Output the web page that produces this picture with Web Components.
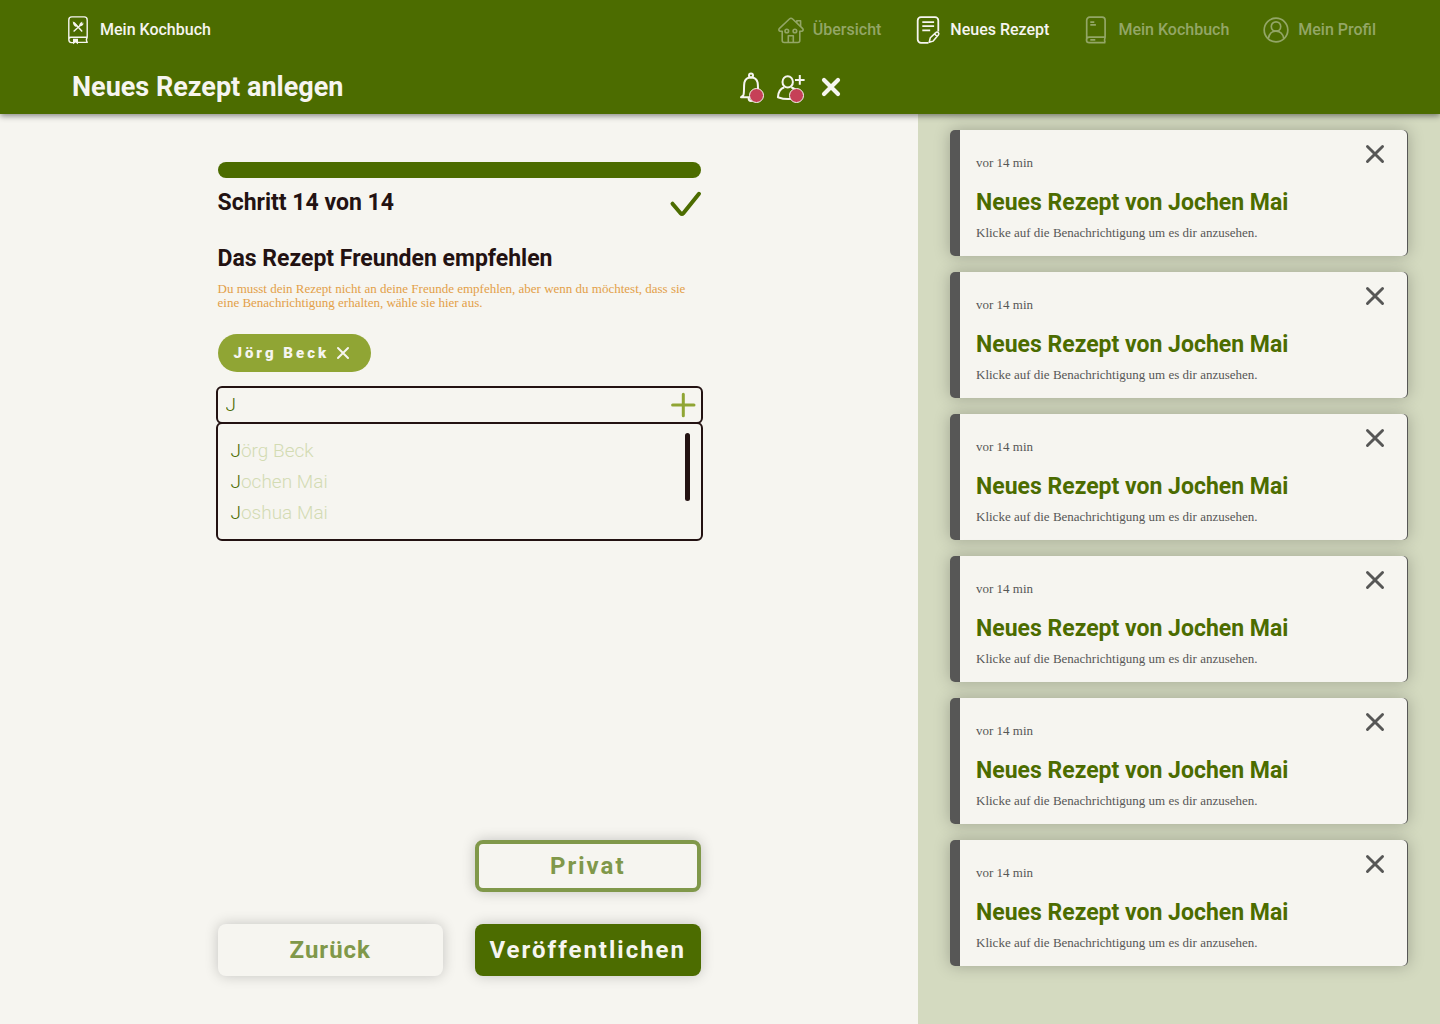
<!DOCTYPE html>
<html lang="de">
<head>
<meta charset="utf-8">
<meta name="viewport" content="width=device-width, initial-scale=1">
<title>Mein Kochbuch – Neues Rezept anlegen</title>
<style>
  :root {
    --green: #4c6c00;
    --moss: #80984a;
    --lime: #90a534;
    --paper: #f6f5f0;
    --ink: #231212;
    --grey: #575756;
    --sage: #d4dac0;
    --orange: #e39f48;
    --rose: #c64057;
    --slab: "Roboto Slab", "Liberation Serif", serif;
    --side: 36.25%;
  }
  body {
    margin: 0;
    background: var(--paper);
    color: var(--ink);
    font-family: Roboto, sans-serif;
  }
</style>
</head>
<body>
<kb-app></kb-app>

<script>
const define = (name, html, setup) => {
  const template = document.createElement('template');
  template.innerHTML = `<style>*{box-sizing:border-box}button{font:inherit;color:inherit;background:none;border:0;padding:0;cursor:pointer}</style>${html}`;
  customElements.define(name, class extends HTMLElement {
    constructor() {
      super();
      this.attachShadow({ mode: 'open' }).append(template.content.cloneNode(true));
    }
    connectedCallback() {
      if (setup) setup(this, this.shadowRoot);
    }
  });
};

const icons = {
  logo: `<g stroke-width="1.4"><path d="M4.8 23.500V3.900a3 3 0 0 1 3-3h12.400a3 3 0 0 1 3 3v17.300H6.800a2.400 2.400 0 0 0-2 2.400c0 1.800 1 3 2.600 3h2M13.500 26.400h9.700c-1-1.500-1-3.400 0-5.200"/><path d="m10 6.500 8.200 9M18 7.800 9.600 15.600"/></g><path fill="currentColor" stroke="none" d="M9 22.700h5v5.500l-2.500-1.700L9 28.200zM8.800 5.200l4.700 4.400-1.300 1.300C10 10.200 8.800 8 8.800 5.200zM15.500 10.200c-.8-2 .4-3.400 2.800-4.800l-.8 2 2-1.500-1.300 2.100 1.600-.7c-.8 2-2.600 3.600-4.300 2.900z"/>`,
  home: `<g stroke-width="1.600"><path d="M5.200 15.200H3.500c-1.700 0-2.200-1.700-1-2.800L12.400 3c1-.9 2.200-.9 3.200 0l9.900 9.400c1.200 1.100.7 2.800-1 2.800h-1.700v9.300a2 2 0 0 1-2 2H7.200a2 2 0 0 1-2-2z"/><path d="M19.800 6.800V4.700h3.800v5.700"/><circle cx="9.800" cy="15" r="1.800"/><circle cx="17.900" cy="15" r="1.800"/><path d="M11.300 26.200v-6.400h5v6.400M14.500 23h.2"/></g>`,
  note: `<g stroke-width="1.800"><path d="M14.500 26.800H7a3.300 3.300 0 0 1-3.300-3.300V4.500A3.300 3.300 0 0 1 7 1.200h14a3.300 3.300 0 0 1 3.300 3.300v11"/><path d="M8.300 6.200h11.800M8.300 10.200h11.800M8.300 14.300h7.900"/><path d="m15.200 26.300 1.100-4.500 5.500-5.200a1.700 1.700 0 0 1 2.500 2.500l-5.100 6zM20.700 18l2.400 2.500" stroke-width="1.500"/></g>`,
  book: `<g stroke-width="1.700"><path d="M4.700 24V4.200a3 3 0 0 1 3-3h12.400a3 3 0 0 1 3 3v17H7.200a2.600 2.600 0 0 0 0 5.400h16.200M23.100 21.200c-.7 1.700-.7 3.600 0 5.300"/><path d="M8.300 6.100h4M8.300 8.800h5.600M8.300 23.900h5"/></g>`,
  profile: `<g stroke-width="1.700"><circle cx="14" cy="14" r="11.800"/><circle cx="14" cy="10.500" r="4.700"/><path d="M6.300 22.500c.6-4.400 3.700-7.300 7.700-7.300s7.100 2.900 7.700 7.300"/></g>`,
  bell: `<g stroke-width="2"><circle cx="14" cy="2.400" r="2"/><path d="M6.300 22.400c1.200-2.700.3-8.700 1.100-12.900.7-3.200 3.200-5.100 6.600-5.100s5.900 1.900 6.600 5.100c.8 4.200-.1 10.200 1.100 12.900l2.400 1.800H4z"/><path d="M11.600 25c0 4 4.800 4 4.800 0"/></g>`,
  addfriend: `<g stroke-width="2"><ellipse cx="10.700" cy="8.900" rx="5.200" ry="5.700"/><path d="M7.300 14.200C3.600 15.400 1.200 19 .900 24.200c5.800 2.200 14.200 2.200 20.200.3-.3-5.200-2.400-9-6.900-10.300"/><path d="M18 6.900h9.600M22.800 2v9.800"/></g>`,
  close: `<path stroke-width="4.200" stroke-linecap="round" d="m7 7 14 14M21 7 7 21"/>`,
  cross: `<path stroke-width="3.400" stroke-linecap="round" d="m5.200 5.200 17.600 17.600M22.800 5.200 5.200 22.800"/>`,
  check: `<path stroke-width="4" stroke-linecap="round" stroke-linejoin="round" d="m1.500 14.700 8.300 9.800c.7.800 1.600.8 2.300 0L28 4.800"/>`,
  plus: `<path stroke-width="3" stroke-linecap="round" d="M14.300 3.300v21.400M3.600 14H25"/>`
};

define('kb-icon', `
  <style>
    :host { display: block; flex: none; width: var(--size, 28px); height: var(--size, 28px); }
    svg { display: block; width: 100%; height: 100%; overflow: visible; fill: none; stroke: currentColor; stroke-linejoin: round; }
  </style>
  <svg viewBox="0 0 28 28" aria-hidden="true"></svg>`,
  (host, root) => { root.querySelector('svg').innerHTML = icons[host.getAttribute('name')]; });

define('kb-nav-link', `
  <style>
    :host { display: block; }
    a { display: flex; align-items: center; gap: 8px; color: var(--paper); text-decoration: none; font-size: 16px; line-height: 20px; font-weight: 500; white-space: nowrap; }
    :host([muted]) a { color: #93a666; }
  </style>
  <a href="#"><kb-icon></kb-icon><slot></slot></a>`,
  (host, root) => {
    const fresh = document.createElement('kb-icon');
    fresh.setAttribute('name', host.getAttribute('icon'));
    root.querySelector('kb-icon').replaceWith(fresh);
  });

define('kb-header', `
  <style>
    :host { display: block; position: relative; z-index: 1; background: var(--green); color: var(--paper); box-shadow: 0 2px 6px rgba(0,0,0,.45); }
    .top { display: flex; justify-content: space-between; align-items: center; height: 60px; padding: 0 64px; }
    nav { display: flex; gap: 33px; }
    .bar { display: flex; justify-content: space-between; align-items: center; height: 54px; margin-right: var(--side); padding: 0 73px 0 72px; }
    h1 { margin: 0; font-size: 27px; line-height: 32px; font-weight: 700; }
    .actions { display: flex; gap: 12px; }
    button { position: relative; }
    .alert::after { content: ""; position: absolute; right: 1px; bottom: -2px; width: 13px; height: 13px; border: 1px solid var(--paper); border-radius: 50%; background: var(--rose); }
  </style>
  <div class="top">
    <kb-nav-link icon="logo">Mein Kochbuch</kb-nav-link>
    <nav aria-label="Hauptmenü">
      <kb-nav-link icon="home" muted>Übersicht</kb-nav-link>
      <kb-nav-link icon="note">Neues Rezept</kb-nav-link>
      <kb-nav-link icon="book" muted>Mein Kochbuch</kb-nav-link>
      <kb-nav-link icon="profile" muted>Mein Profil</kb-nav-link>
    </nav>
  </div>
  <div class="bar">
    <h1><slot></slot></h1>
    <div class="actions">
      <button class="alert" aria-label="Benachrichtigungen"><kb-icon name="bell"></kb-icon></button>
      <button class="alert" aria-label="Freundschaftsanfragen"><kb-icon name="addfriend"></kb-icon></button>
      <button aria-label="Schließen"><kb-icon name="close"></kb-icon></button>
    </div>
  </div>`);

define('kb-step', `
  <style>
    :host { display: block; }
    .track { height: 16px; border-radius: 8px; background: var(--green); }
    .row { display: flex; justify-content: space-between; align-items: center; margin-top: 11px; }
    h2 { margin: 0; font-size: 23px; line-height: 28px; font-weight: 700; }
    kb-icon { --size: 32px; height: 28px; color: var(--green); }
  </style>
  <div class="track" role="progressbar" aria-valuemin="0" aria-valuemax="14" aria-valuenow="14" aria-label="Fortschritt"></div>
  <div class="row"><h2><slot></slot></h2><kb-icon name="check"></kb-icon></div>`);

define('kb-chip', `
  <style>
    :host { display: flex; align-items: center; gap: 6px; width: fit-content; height: 38px; padding: 0 20px 0 16px; border-radius: 19px; background: var(--lime); color: var(--paper); font-size: 15px; line-height: 20px; font-weight: 900; letter-spacing: 3px; }
    kb-icon { --size: 16px; }
  </style>
  <slot></slot><button aria-label="Entfernen"><kb-icon name="cross"></kb-icon></button>`);

define('kb-option', `
  <style>
    :host { display: block; }
    button { display: block; width: 100%; text-align: left; font-size: 19px; line-height: 31px; font-weight: 300; color: #d3dbb3; }
    ::slotted(b) { font-weight: 300; color: var(--green); }
  </style>
  <button><slot></slot></button>`);

define('kb-friend-picker', `
  <style>
    :host { display: block; margin: 0 -2px; }
    .box { border: 2px solid var(--ink); border-radius: 6px; }
    .field { display: flex; align-items: center; height: 38px; padding: 0 4px 0 8px; }
    input { flex: 1; min-width: 0; padding: 0; border: 0; outline: 0; background: none; font: 300 19px/24px Roboto, sans-serif; color: var(--green); }
    .field button { color: var(--lime); }
    .list { display: flex; justify-content: space-between; height: 119px; margin-top: -2px; padding: 9px 11px 0 13px; }
    .options { flex: 1; padding-top: 2px; }
    .thumb { width: 5px; height: 68px; border-radius: 3px; background: var(--ink); }
  </style>
  <div class="box field"><input type="text" value="J" autocomplete="off" aria-label="Freund suchen"><button aria-label="Hinzufügen"><kb-icon name="plus"></kb-icon></button></div>
  <div class="box list"><div class="options"><slot></slot></div><div class="thumb"></div></div>`);

define('kb-button', `
  <style>
    :host { display: block; }
    button { display: block; width: 100%; height: 52px; border-radius: 8px; background: var(--paper); color: var(--moss); box-shadow: 0 0 14px rgba(0,0,0,.2); font-size: 24px; line-height: 28px; font-weight: 700; letter-spacing: 2px; }
    :host([kind="plain"]) button { letter-spacing: 1px; }
    :host([kind="outline"]) button { border: 4px solid var(--moss); }
    :host([kind="solid"]) button { background: var(--green); color: var(--paper); }
  </style>
  <button><slot></slot></button>`);

define('kb-recipe-form', `
  <style>
    :host { display: flex; flex-direction: column; width: 100%; max-width: 483px; margin: 0 auto; }
    h2 { margin: 28px 0 9px; font-size: 23px; line-height: 28px; font-weight: 700; }
    p { margin: 0 0 24px; font: 13px/14px var(--slab); color: var(--orange); }
    kb-friend-picker { margin-top: 14px; }
    .buttons { display: grid; grid-template-columns: 1fr 1fr; gap: 32px; margin-top: auto; padding-top: 48px; }
    .right { grid-column: 2; }
  </style>
  <kb-step>Schritt 14 von 14</kb-step>
  <h2>Das Rezept Freunden empfehlen</h2>
  <p>Du musst dein Rezept nicht an deine Freunde empfehlen, aber wenn du möchtest, dass sie eine Benachrichtigung erhalten, wähle sie hier aus.</p>
  <kb-chip>Jörg Beck</kb-chip>
  <kb-friend-picker>
    <kb-option><b>J</b>örg Beck</kb-option>
    <kb-option><b>J</b>ochen Mai</kb-option>
    <kb-option><b>J</b>oshua Mai</kb-option>
  </kb-friend-picker>
  <div class="buttons">
    <kb-button class="right" kind="outline">Privat</kb-button>
    <kb-button kind="plain">Zurück</kb-button>
    <kb-button kind="solid">Veröffentlichen</kb-button>
  </div>`);

define('kb-notification', `
  <style>
    :host { display: block; padding: 0 1px 0 10px; border-radius: 5px; background: var(--grey); box-shadow: 0 0 16px rgba(0,0,0,.25); }
    article { display: flex; justify-content: space-between; align-items: flex-start; padding: 0 20px 16px 16px; border-radius: 0 5px 5px 0; background: var(--paper); color: var(--grey); font: 13px/14px var(--slab); }
    .text { padding-top: 26px; }
    h3 { margin: 19px 0 9px; font: 700 23px/28px Roboto, sans-serif; color: var(--green); }
    p { margin: 0; }
    button { margin-top: 12px; }
    kb-icon { --size: 24px; }
  </style>
  <article>
    <div class="text"><slot name="time"></slot><h3><slot></slot></h3><p><slot name="text"></slot></p></div>
    <button aria-label="Benachrichtigung schließen"><kb-icon name="cross"></kb-icon></button>
  </article>`);

define('kb-notifications', `
  <style>
    :host { display: flex; flex-direction: column; gap: 16px; padding: 16px 32px; background: var(--sage); }
  </style>
  <slot></slot>`,
  host => {
    for (let i = 0; i < 6; i++) {
      const card = document.createElement('kb-notification');
      card.innerHTML = '<span slot="time">vor 14 min</span>Neues Rezept von Jochen Mai<span slot="text">Klicke auf die Benachrichtigung um es dir anzusehen.</span>';
      host.append(card);
    }
  });

define('kb-app', `
  <style>
    :host { display: flex; flex-direction: column; min-height: 100vh; }
    .body { display: flex; flex: 1; }
    main { display: flex; flex: 1; min-width: 0; padding: 48px 16px; }
    aside { display: flex; flex: 0 0 var(--side); }
    kb-notifications { flex: 1; }
  </style>
  <kb-header>Neues Rezept anlegen</kb-header>
  <div class="body">
    <main><kb-recipe-form></kb-recipe-form></main>
    <aside aria-label="Benachrichtigungen"><kb-notifications></kb-notifications></aside>
  </div>`);
</script>
</body>
</html>
